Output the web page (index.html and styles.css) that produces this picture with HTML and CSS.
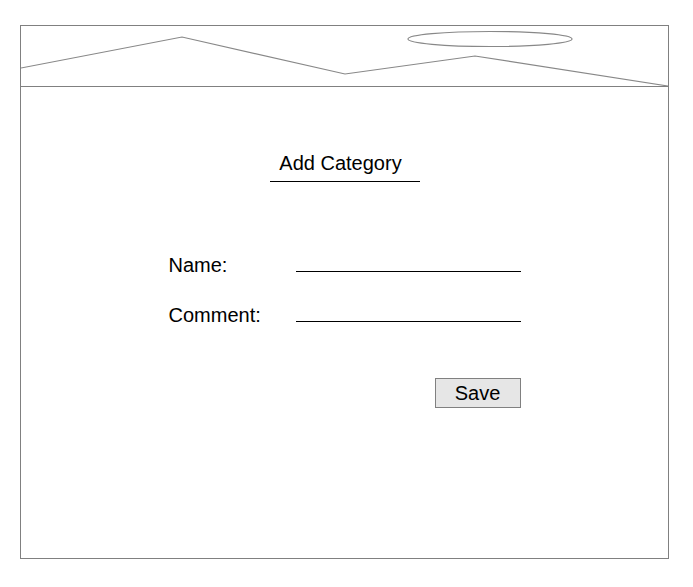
FILE: index.html
```html
<!DOCTYPE html>
<html lang="en">
<head>
    <meta charset="UTF-8">
    <meta name="viewport" content="width=device-width, initial-scale=1.0">
    <title>Add Category</title>
    <link rel="stylesheet" href="styles.css">
</head>
<body>
    <div class="frame">
        <div class="header">
            <svg width="647" height="60" viewBox="0 0 647 60">
                <polyline points="0,42 161,11 324,48 454,30 647,60" fill="none" stroke="#888" stroke-width="1.2"/>
                <ellipse cx="469" cy="13" rx="82" ry="7.5" fill="none" stroke="#888" stroke-width="1.2"/>
            </svg>
        </div>

        <div class="content">
            <div class="title">Add Category</div>

            <form class="category-form">
                <div class="row">
                    <label for="name">Name:</label>
                    <div class="field" id="name"></div>
                </div>
                <div class="row">
                    <label for="comment">Comment:</label>
                    <div class="field" id="comment"></div>
                </div>
                <div class="actions">
                    <button type="button">Save</button>
                </div>
            </form>
        </div>
    </div>
</body>
</html>
```

FILE: styles.css
```css
body {
    margin: 0;
    font-family: "Liberation Sans", Arial, sans-serif;
    background: #fff;
}

.frame {
    margin: 25px 0 0 20px;
    width: 647px;
    height: 532px;
    border: 1px solid #808080;
}

.header {
    height: 60px;
    border-bottom: 1px solid #808080;
}

.header svg {
    display: block;
}

.content {
    padding-top: 65px;
}

.title {
    width: 142px;
    margin: 0 auto;
    padding: 0 8px 6px 0;
    text-align: center;
    font-size: 20px;
    line-height: 23px;
    border-bottom: 1px solid #000;
}

.category-form {
    width: 352px;
    margin: 72px auto 0;
}

.row {
    display: flex;
    height: 23px;
    margin-bottom: 27px;
}

.row label {
    width: 127px;
    font-size: 20px;
    line-height: 23px;
}

.field {
    width: 225px;
    height: 17px;
    border-bottom: 1px solid #000;
}

.actions {
    display: flex;
    justify-content: flex-end;
    padding-top: 24px;
}

.actions button {
    width: 86px;
    height: 30px;
    padding: 0;
    font-family: "Liberation Sans", Arial, sans-serif;
    font-size: 20px;
    color: #000;
    background-color: #e6e6e6;
    border: 1px solid #808080;
    border-radius: 0;
}
```
